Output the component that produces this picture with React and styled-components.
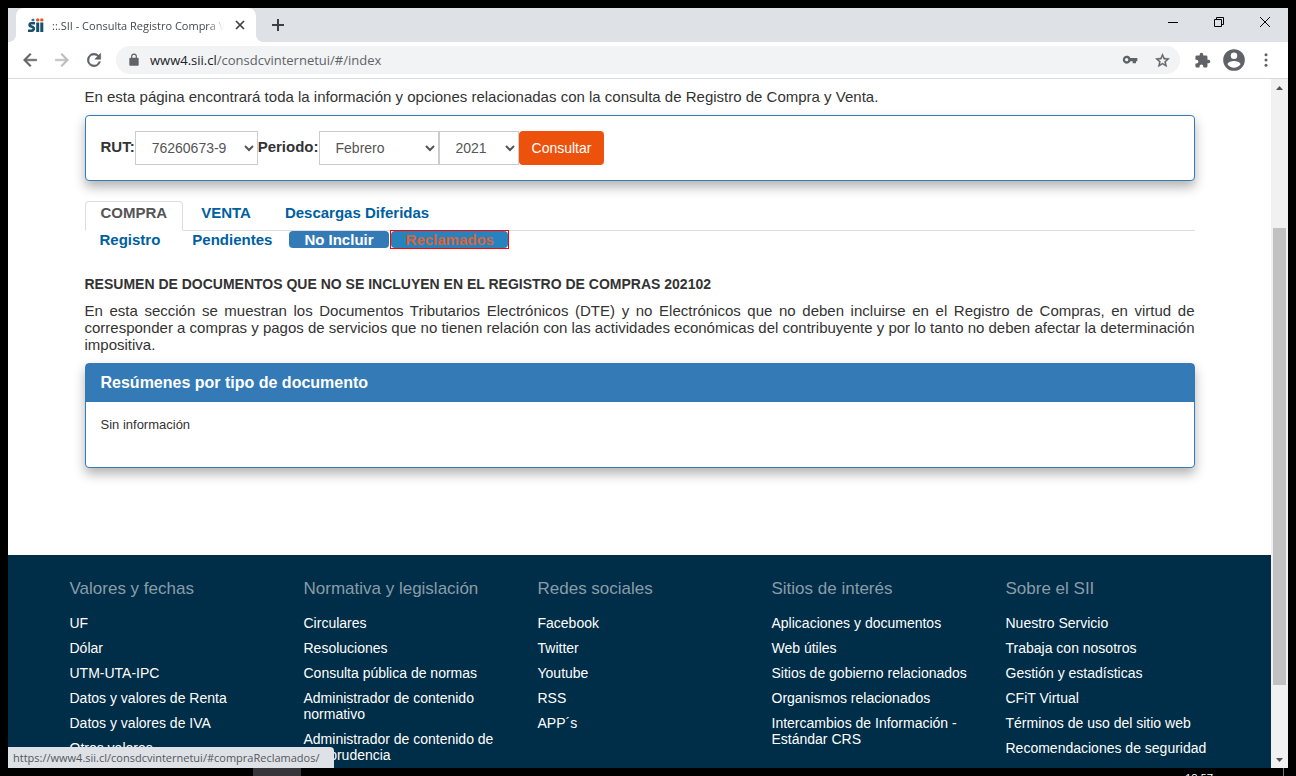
import React from "react";
import styled, { createGlobalStyle } from "styled-components";

const GlobalStyle = createGlobalStyle`
  *, *::before, *::after { box-sizing: border-box; }
  body {
    margin: 0;
    background: #000;
    color: #333;
    font-family: "Liberation Sans", Arial, sans-serif;
    font-size: 15px;
    line-height: 17px;
  }
  button, select { font-family: inherit; }
`;

const Screen = styled.div`
  height: 100vh;
  padding: 8px 8px 0;
  display: flex;
  flex-direction: column;
  overflow: hidden;
`;

const BrowserWindow = styled.div`
  position: relative;
  flex: 1;
  min-height: 0;
  display: flex;
  flex-direction: column;
  overflow: hidden;
  background: #fff;
`;

const ChromeFont = `font-family: "Open Sans", "Noto Sans", sans-serif;`;

const TabStrip = styled.div`
  flex: none;
  height: 34px;
  padding-left: 8px;
  display: flex;
  background: #dee1e6;
  ${ChromeFont}
`;

const BrowserTab = styled.div`
  position: relative;
  width: 240px;
  padding: 0 8px 0 12px;
  display: flex;
  align-items: center;
  gap: 8px;
  background: #fff;
  border-radius: 8px 8px 0 0;
  &::before, &::after {
    content: "";
    position: absolute;
    bottom: 0;
    width: 8px;
    height: 8px;
  }
  &::before {
    right: 100%;
    background: radial-gradient(circle at 0 0, transparent 8px, #fff 8px);
  }
  &::after {
    left: 100%;
    background: radial-gradient(circle at 100% 0, transparent 8px, #fff 8px);
  }
`;

const TabTitle = styled.span`
  flex: 1;
  overflow: hidden;
  white-space: nowrap;
  font-size: 11px;
  color: #45494d;
  mask-image: linear-gradient(to right, #000 90%, transparent);
`;

const IconButton = styled.button`
  flex: none;
  width: ${(p) => p.$width || 32}px;
  height: ${(p) => p.$height || 32}px;
  padding: 0;
  border: 0;
  background: none;
  color: ${(p) => p.$color || "#5f6368"};
  display: flex;
  align-items: center;
  justify-content: center;
`;

const WindowControls = styled.div`
  margin-left: auto;
  display: flex;
`;

const Toolbar = styled.div`
  flex: none;
  height: 37px;
  padding: 0 6px;
  display: flex;
  align-items: center;
  border-bottom: 1px solid #d9dadc;
`;

const AddressBar = styled.div`
  flex: 1;
  height: 28px;
  margin: 0 6px;
  padding: 0 2px 0 11px;
  display: flex;
  align-items: center;
  border-radius: 14px;
  background: #f1f3f4;
  color: #5f6368;
`;

const Address = styled.span`
  flex: 1;
  margin-left: 9px;
  font-size: 13px;
  ${ChromeFont}
  b { font-weight: 400; color: #202124; }
`;

const Viewport = styled.div`
  flex: 1;
  min-height: 0;
  display: flex;
`;

const Page = styled.div`
  flex: 1;
  min-width: 0;
  overflow: hidden;
`;

const Scrollbar = styled.div`
  flex: none;
  width: 17px;
  padding: 0 2px;
  display: grid;
  grid-template-rows: 17px 132fr 457fr 66fr 17px;
  background: #f1f1f1;
  color: #505050;
  svg { align-self: center; justify-self: center; }
  svg:last-child { grid-row: 5; }
`;

const Thumb = styled.div`
  grid-row: 3;
  background: #c1c1c1;
`;

const Main = styled.main`
  max-width: 1140px;
  margin: 0 auto;
  padding: 9px 15px 87px;
`;

const Intro = styled.p`
  margin: 0 0 10px;
`;

const Panel = styled.section`
  border: 1px solid #337ab7;
  border-radius: 4px;
  background: #fff;
  box-shadow: 0 6px 12px rgba(0, 0, 0, 0.3);
`;

const SearchForm = styled.form`
  padding: 15px;
  display: flex;
  align-items: center;
  line-height: 32px;
`;

const FieldLabel = styled.label`
  padding-bottom: 2px;
  font-weight: 700;
`;

const Select = styled.select`
  width: ${(p) => p.$width}px;
  height: 34px;
  padding: 6px 13px 6px 12px;
  border: 1px solid #ccc;
  border-radius: 0;
  background-color: #fff;
  color: #555;
  font-size: 14px;
`;

const SubmitButton = styled.button`
  height: 34px;
  padding: 0 13px;
  border: 0;
  border-radius: 4px;
  background: #ec520b;
  color: #fff;
  font-size: 14px;
`;

const Tabs = styled.nav`
  margin-top: 20px;
  display: flex;
  gap: 2px;
  height: 30px;
  border-bottom: 1px solid #ddd;
`;

const TabLink = styled.a`
  height: 30px;
  padding: 1px 15px 0;
  line-height: 20px;
  border: 1px solid ${(p) => (p.$active ? "#ddd" : "transparent")};
  border-bottom-color: ${(p) => (p.$active ? "#fff" : "transparent")};
  border-radius: 4px 4px 0 0;
  background: ${(p) => (p.$active ? "#fff" : "transparent")};
  color: ${(p) => (p.$active ? "#555" : "#00609f")};
  font-weight: 700;
  text-decoration: none;
`;

const Pills = styled.nav`
  display: flex;
  gap: 2px;
`;

const Pill = styled.a`
  display: block;
  height: 17px;
  padding: 0 15px;
  border-radius: 4px;
  font-weight: 700;
  text-decoration: none;
  color: ${(p) => (p.$active ? "#fff" : "#00609f")};
  background: ${(p) => (p.$active ? "#337ab7" : "transparent")};
`;

const HoveredPill = styled(Pill)`
  padding: 0 14px 0 15px;
  background: #2783be;
  color: #dc6238;
`;

const Highlight = styled.div`
  outline: 1px solid #f00;
`;

const Heading = styled.h1`
  margin: 28px 0 9px;
  font-size: 14px;
  line-height: 17px;
`;

const Description = styled.p`
  margin: 0 0 10px;
  text-align: justify;
`;

const PanelTitle = styled.h2`
  margin: 0;
  padding: 10px 15px;
  font-size: 16px;
  line-height: 18px;
  color: #fff;
  background: #337ab7;
`;

const PanelBody = styled.div`
  padding: 15px 15px 34px;
  font-size: 13px;
  line-height: 16px;
`;

const Footer = styled.footer`
  background: #002d47;
`;

const FooterGrid = styled.div`
  max-width: 1140px;
  margin: 0 auto;
  padding: 24px 0;
  display: grid;
  grid-template-columns: repeat(4, minmax(0, 234fr)) minmax(0, 204fr);
`;

const FooterTitle = styled.h3`
  margin: 0 0 16px;
  font-size: 17px;
  font-weight: 400;
  line-height: 20px;
  color: #8a9ca8;
`;

const FooterList = styled.ul`
  margin: 0;
  padding: 0 ${(p) => (p.$last ? 0 : 30)}px 0 0;
  list-style: none;
  display: flex;
  flex-direction: column;
  gap: 9px;
  font-size: 14px;
  line-height: 16px;
  a { color: #fff; text-decoration: none; }
`;

const StatusBubble = styled.div`
  position: absolute;
  left: 0;
  bottom: 0;
  padding: 0 6px 0 5px;
  min-width: 326px;
  height: 21px;
  line-height: 21px;
  font-size: 11px;
  color: #54585c;
  background: #dee1e6;
  border-radius: 0 4px 0 0;
  white-space: nowrap;
  ${ChromeFont}
`;

const Taskbar = styled.div`
  flex: none;
  height: 8px;
  padding-left: 245px;
  display: flex;
  justify-content: space-between;
  overflow: hidden;
`;

const TaskbarApp = styled.div`
  width: 48px;
  background: #36363a;
`;

const TaskbarTray = styled.div`
  margin-right: 4px;
  padding: 3px 70px 0 0;
  border-right: 1px solid #77787c;
  color: #fff;
  font-size: 11px;
  line-height: 14px;
  ${ChromeFont}
`;

const Icon = ({ size = 20, box = "0 0 24 24", children }) => (
  <svg width={size} height={size} viewBox={box} fill="currentColor" aria-hidden="true">
    {children}
  </svg>
);

const SiiLogo = () => (
  <svg width="16" height="16" viewBox="0 0 16 16" aria-hidden="true">
    <path d="M7 6.300H3.300Q1.600 6.300 1.600 7.800T3.400 9.400Q5.800 9.900 5.800 11.600T3.900 13.700H0" fill="none" stroke="#17506b" strokeWidth="2.600" />
    <path d="M8.200 5.600h3V15h-3zM12.300 5.600h3V15h-3z" fill="#17506b" />
    <rect x="3.500" y="1.800" width="3" height="2.400" rx="1" fill="#2b7c98" />
    <circle cx="9.700" cy="2.900" r="1.700" fill="#ee5226" />
    <circle cx="13.800" cy="2.900" r="1.700" fill="#ee5226" />
  </svg>
);

const footerColumns = [
  { title: "Valores y fechas", links: ["UF", "Dólar", "UTM-UTA-IPC", "Datos y valores de Renta", "Datos y valores de IVA", "Otros valores"] },
  { title: "Normativa y legislación", links: ["Circulares", "Resoluciones", "Consulta pública de normas", "Administrador de contenido normativo", "Administrador de contenido de jurisprudencia"] },
  { title: "Redes sociales", links: ["Facebook", "Twitter", "Youtube", "RSS", "APP´s"] },
  { title: "Sitios de interés", links: ["Aplicaciones y documentos", "Web útiles", "Sitios de gobierno relacionados", "Organismos relacionados", "Intercambios de Información - Estándar CRS"] },
  { title: "Sobre el SII", last: true, links: ["Nuestro Servicio", "Trabaja con nosotros", "Gestión y estadísticas", "CFiT Virtual", "Términos de uso del sitio web", "Recomendaciones de seguridad"] },
];

const BrowserTabs = () => (
  <TabStrip>
    <BrowserTab>
      <SiiLogo />
      <TabTitle>::.SII - Consulta Registro Compra Venta</TabTitle>
      <IconButton $width={16} $height={16} $color="#3c4043" aria-label="Cerrar pestaña">
        <Icon size={10} box="0 0 10 10"><path d="M1 1l8 8M9 1L1 9" stroke="currentColor" strokeWidth="1.7" /></Icon>
      </IconButton>
    </BrowserTab>
    <IconButton $width={44} $height={34} $color="#3c4043" aria-label="Nueva pestaña">
      <Icon size={12} box="0 0 12 12"><path d="M5 0h2v5h5v2H7v5H5V7H0V5h5z" /></Icon>
    </IconButton>
    <WindowControls>
      <IconButton $width={46} $height={28} $color="#000" aria-label="Minimizar">
        <Icon size={10} box="0 0 10 10"><path d="M0 5h10v1H0z" /></Icon>
      </IconButton>
      <IconButton $width={46} $height={28} $color="#000" aria-label="Restaurar">
        <Icon size={10} box="0 0 10 10"><path d="M.5 2.5h7v7h-7zM2.5 2.5v-2h7v7h-2" fill="none" stroke="currentColor" /></Icon>
      </IconButton>
      <IconButton $width={46} $height={28} $color="#000" aria-label="Cerrar">
        <Icon size={10} box="0 0 10 10"><path d="M0 0l10 10M10 0L0 10" stroke="currentColor" /></Icon>
      </IconButton>
    </WindowControls>
  </TabStrip>
);

const BrowserToolbar = () => (
  <Toolbar>
    <IconButton aria-label="Atrás"><Icon><path stroke="currentColor" strokeWidth="0.6" d="M20 11H7.8l5.6-5.6L12 4l-8 8 8 8 1.4-1.4L7.8 13H20z" /></Icon></IconButton>
    <IconButton $color="#babcbe" aria-label="Adelante"><Icon><path stroke="currentColor" strokeWidth="0.6" d="M12 4l-1.4 1.4 5.6 5.6H4v2h12.2l-5.6 5.6L12 20l8-8z" /></Icon></IconButton>
    <IconButton aria-label="Recargar"><Icon><path stroke="currentColor" strokeWidth="0.7" d="M17.65 6.35A8 8 0 1 0 19.73 14h-2.08A6 6 0 1 1 12 6c1.66 0 3.14.69 4.22 1.78L13 11h7V4z" /></Icon></IconButton>
    <AddressBar>
      <Icon size={14}><path d="M18 8h-1V6A5 5 0 0 0 7 6v2H6a2 2 0 0 0-2 2v10c0 1.100.9 2 2 2h12a2 2 0 0 0 2-2V10a2 2 0 0 0-2-2zM9 6a3 3 0 0 1 6 0v2H9z" /></Icon>
      <Address><b>www4.sii.cl</b>/consdcvinternetui/#/index</Address>
      <IconButton aria-label="Contraseñas"><Icon size={16}><path fillRule="evenodd" d="M12.65 9a6 6 0 1 0 0 5H16v3h5v-3h2V9zM7 14a2.500 2.500 0 1 1 0-5 2.500 2.500 0 0 1 0 5z" /></Icon></IconButton>
      <IconButton aria-label="Favoritos"><Icon size={17}><path stroke="currentColor" strokeWidth="0.5" d="M22 9.240l-7.190-.62L12 2 9.190 8.630 2 9.240l5.460 4.730L5.820 21 12 17.270 18.180 21l-1.630-7.030zM12 15.400l-3.760 2.270 1-4.280-3.320-2.880 4.380-.38L12 6.100l1.710 4.040 4.380.38-3.320 2.880 1 4.280z" /></Icon></IconButton>
    </AddressBar>
    <IconButton aria-label="Extensiones"><Icon size={17}><path d="M20.500 11H19V7a2 2 0 0 0-2-2h-4V3.500a2.500 2.500 0 0 0-5 0V5H4a2 2 0 0 0-2 2v3.800h1.500a2.700 2.700 0 0 1 0 5.400H2V20a2 2 0 0 0 2 2h3.800v-1.500a2.700 2.700 0 0 1 5.400 0V22H17a2 2 0 0 0 2-2v-4h1.500a2.500 2.500 0 0 0 0-5z" /></Icon></IconButton>
    <IconButton aria-label="Perfil"><Icon size={26}><path d="M12 2a10 10 0 1 0 0 20 10 10 0 0 0 0-20zm0 3a3 3 0 1 1 0 6 3 3 0 0 1 0-6zm0 14.200a7.200 7.200 0 0 1-6-3.220c.03-1.990 4-3.080 6-3.080s5.970 1.090 6 3.080a7.200 7.200 0 0 1-6 3.220z" /></Icon></IconButton>
    <IconButton aria-label="Menú"><Icon size={18}><circle cx="12" cy="5" r="2" /><circle cx="12" cy="12" r="2" /><circle cx="12" cy="19" r="2" /></Icon></IconButton>
  </Toolbar>
);

const SiteFooter = () => (
  <Footer>
    <FooterGrid>
      {footerColumns.map((column) => (
        <div key={column.title}>
          <FooterTitle>{column.title}</FooterTitle>
          <FooterList $last={column.last}>
            {column.links.map((link) => (
              <li key={link}><a href="#enlace">{link}</a></li>
            ))}
          </FooterList>
        </div>
      ))}
    </FooterGrid>
  </Footer>
);

export default function App() {
  return (
    <>
      <GlobalStyle />
      <Screen>
        <BrowserWindow>
          <BrowserTabs />
          <BrowserToolbar />
          <Viewport>
            <Page>
              <Main>
                <Intro>En esta página encontrará toda la información y opciones relacionadas con la consulta de Registro de Compra y Venta.</Intro>
                <Panel>
                  <SearchForm>
                    <FieldLabel htmlFor="rut">RUT:</FieldLabel>
                    <Select id="rut" $width={123}><option>76260673-9</option></Select>
                    <FieldLabel htmlFor="mes">Periodo:</FieldLabel>
                    <Select id="mes" $width={120}><option>Febrero</option></Select>
                    <Select aria-label="Año" $width={80}><option>2021</option></Select>
                    <SubmitButton type="button">Consultar</SubmitButton>
                  </SearchForm>
                </Panel>
                <Tabs>
                  <TabLink href="#compra" $active>COMPRA</TabLink>
                  <TabLink href="#venta">VENTA</TabLink>
                  <TabLink href="#descargas">Descargas Diferidas</TabLink>
                </Tabs>
                <Pills>
                  <Pill href="#compraRegistro/">Registro</Pill>
                  <Pill href="#compraPendientes/">Pendientes</Pill>
                  <Pill href="#compraNoIncluir/" $active>No Incluir</Pill>
                  <Highlight>
                    <HoveredPill href="#compraReclamados/">Reclamados</HoveredPill>
                  </Highlight>
                </Pills>
                <Heading>RESUMEN DE DOCUMENTOS QUE NO SE INCLUYEN EN EL REGISTRO DE COMPRAS 202102</Heading>
                <Description>
                  En esta sección se muestran los Documentos Tributarios Electrónicos (DTE) y no Electrónicos que no deben incluirse en el Registro de Compras, en virtud de corresponder a compras y pagos de servicios que no tienen relación con las actividades económicas del contribuyente y por lo tanto no deben afectar la determinación impositiva.
                </Description>
                <Panel>
                  <PanelTitle>Resúmenes por tipo de documento</PanelTitle>
                  <PanelBody>Sin información</PanelBody>
                </Panel>
              </Main>
              <SiteFooter />
            </Page>
            <Scrollbar>
              <svg width="7" height="4" viewBox="0 0 7 4" fill="currentColor" aria-hidden="true"><path d="M3.500 0L7 4H0z" /></svg>
              <Thumb />
              <svg width="7" height="4" viewBox="0 0 7 4" fill="currentColor" aria-hidden="true"><path d="M0 0h7L3.500 4z" /></svg>
            </Scrollbar>
          </Viewport>
          <StatusBubble>https://www4.sii.cl/consdcvinternetui/#compraReclamados/</StatusBubble>
        </BrowserWindow>
        <Taskbar>
          <TaskbarApp />
          <TaskbarTray>18:57</TaskbarTray>
        </Taskbar>
      </Screen>
    </>
  );
}
